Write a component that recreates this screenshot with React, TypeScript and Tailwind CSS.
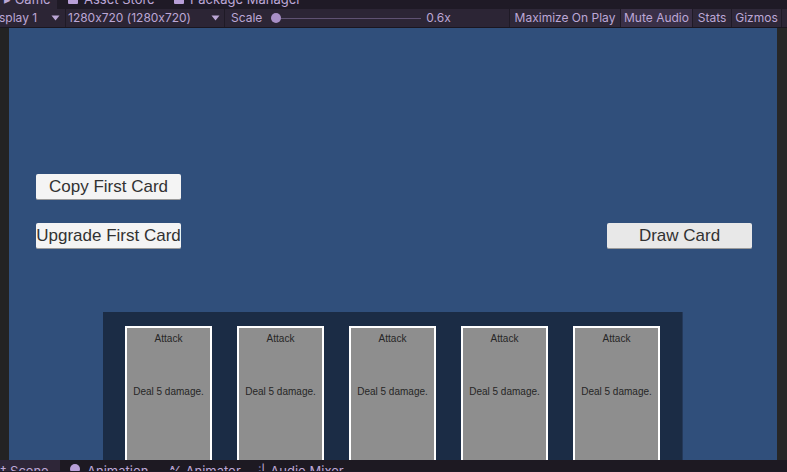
const Card = () => (
  <div className="w-[87px] h-[160px] shrink-0 border-2 border-white bg-[#8e8e8e] flex flex-col items-center font-['Liberation_Sans',Arial,sans-serif] text-[10px] text-[#262626]">
    <p className="mt-[5px] leading-[12px]">Attack</p>
    <p className="mt-[41px] leading-[12px]">Deal 5 damage.</p>
  </div>
);

const GameButton = ({ label, light = true }: { label: string; light?: boolean }) => (
  <div
    className={`w-[145px] h-[26px] flex items-center justify-center rounded-[2px] border-b border-[#9a9a9a] font-['Liberation_Sans',Arial,sans-serif] text-[17px] text-[#323232] ${
      light ? "bg-[#f4f4f4]" : "bg-[#e8e8e8]"
    }`}
  >
    {label}
  </div>
);

const Arrow = () => (
  <svg width="9" height="6" viewBox="0 0 9 6" className="shrink-0">
    <path d="M0.5 0.5h8L4.5 5.5z" fill="#bca7d6" />
  </svg>
);

export default function App() {
  return (
    <div className="w-[787px] h-[472px] overflow-hidden bg-[#1f1a26] flex flex-col font-['Inter',sans-serif] [font-feature-settings:'calt'_0] text-[12px] text-[#bca7d6]">
      {/* top tabs, cut off */}
      <div className="h-[9px] flex overflow-hidden shrink-0">
        <div className="w-[57px] bg-[#2c2535] flex pl-[4px]">
          <span className="-mt-[8px] leading-[14px] text-[13px]">▸ Game</span>
        </div>
        <div className="flex items-start pl-[11px] w-[117px]">
          <span className="w-[10px] h-[4px] bg-[#b89fd8] rounded-b-[1px] mr-[6px]" />
          <span className="-mt-[8px] leading-[14px] text-[13px]">Asset Store</span>
        </div>
        <div className="flex items-start">
          <span className="w-[10px] h-[4px] bg-[#b89fd8] rounded-b-[1px] mr-[6px]" />
          <span className="-mt-[8px] leading-[14px] text-[13px]">Package Manager</span>
        </div>
      </div>

      {/* toolbar */}
      <div className="h-[19px] border-b border-[#1a1620] bg-[#2c2535] flex items-center shrink-0">
        <div className="w-[66px] h-full flex items-center justify-between pr-[5px] border-r border-[#1f1a26]">
          <span className="-ml-[1px]">splay 1</span>
          <Arrow />
        </div>
        <div className="w-[159px] h-full flex items-center justify-between pl-[2px] pr-[4px] border-r border-[#1f1a26]">
          <span>1280x720 (1280x720)</span>
          <Arrow />
        </div>
        <span className="ml-[6px]">Scale</span>
        <div className="ml-[9px] w-[150px] h-full relative flex items-center">
          <div className="w-full h-[1px] bg-[#5f5272]" />
          <div className="absolute left-[0px] w-[10px] h-[10px] rounded-full bg-[#a88fc6]" />
        </div>
        <span className="ml-[5px]">0.6x</span>
        <div className="ml-auto h-full flex">
          <div className="w-[111px] h-full flex items-center justify-center border-l border-[#1f1a26] bg-[#2f2839]">Maximize On Play</div>
          <div className="w-[72px] h-full flex items-center justify-center border-l border-[#1f1a26] bg-[#3a3047]">Mute Audio</div>
          <div className="w-[39px] h-full flex items-center justify-center border-l border-[#1f1a26] bg-[#2f2839]">Stats</div>
          <div className="w-[50px] h-full flex items-center justify-center border-l border-[#1f1a26] bg-[#2f2839]">Gizmos</div>
          <div className="w-[6px] h-full border-l border-[#1f1a26] bg-[#2c2535]" />
        </div>
      </div>

      {/* game view */}
      <div className="h-[432px] flex shrink-0">
        <div className="w-[9px] bg-[#232323]" />
        <div className="flex-1 bg-[#304f7b] overflow-hidden flex flex-col pt-[146px]">
          <div className="pl-[27px]">
            <GameButton label="Copy First Card" />
          </div>
          <div className="mt-[23px] pl-[27px] pr-[25px] flex justify-between">
            <GameButton label="Upgrade First Card" />
            <GameButton label="Draw Card" light={false} />
          </div>
          <div className="mt-[63px] ml-[94px] w-[580px] flex-1 bg-[#1b2c45] border-r border-[#24395a] flex gap-[25px] pl-[22px] pt-[14px]">
            <Card />
            <Card />
            <Card />
            <Card />
            <Card />
          </div>
        </div>
        <div className="w-[10px] bg-[#272727]" />
      </div>

      {/* bottom tabs, cut off */}
      <div className="h-[11px] flex overflow-hidden shrink-0 bg-[#1d1922]">
        <div className="w-[60px] bg-[#2e2638] flex items-start pl-[0px]">
          <span className="mt-[4px] leading-[14px] text-[13px]">‡ Scene</span>
        </div>
        <div className="flex items-start pl-[10px] w-[110px]">
          <span className="mt-[4px] w-[10px] h-[10px] rounded-full bg-[#b89fd8] mr-[7px]" />
          <span className="mt-[4px] leading-[14px] text-[13px]">Animation</span>
        </div>
        <div className="flex items-start w-[88px]">
          <span className="mt-[4px] leading-[14px] text-[13px] mr-[4px]">⅍</span>
          <span className="mt-[4px] leading-[14px] text-[13px]">Animator</span>
        </div>
        <div className="flex items-start">
          <span className="mt-[4px] leading-[14px] text-[13px] mr-[5px]">⫶|</span>
          <span className="mt-[4px] leading-[14px] text-[13px]">Audio Mixer</span>
        </div>
      </div>
    </div>
  );
}
